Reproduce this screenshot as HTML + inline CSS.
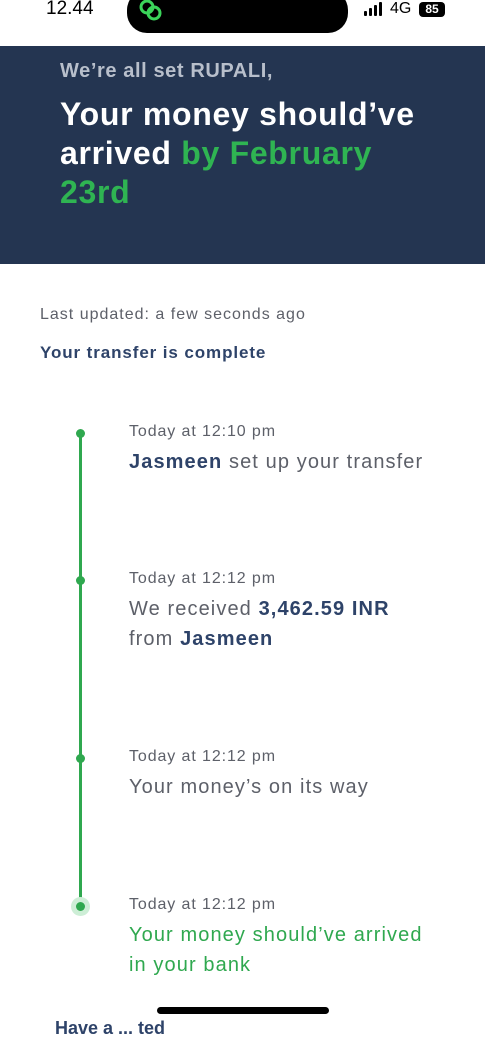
<!DOCTYPE html>
<html><head><style>
*{margin:0;padding:0;box-sizing:border-box}
body{width:485px;height:1024px;overflow:hidden;background:#fff;font-family:"Liberation Sans",sans-serif;position:relative;color:#5d6069}
.a{position:absolute;white-space:nowrap}
.t{font-size:16px;color:#5d6069;letter-spacing:0.9px}
.m{font-size:20px;color:#5d6069;line-height:30px;letter-spacing:1.1px}
b{color:#2e4369;font-weight:bold}
.dot{position:absolute;left:76px;width:9px;height:9px;border-radius:50%;background:#2fa84f}
.bar{position:absolute;width:3px;background:#000;border-radius:1px}
</style></head><body>
<div class="a" style="left:46px;top:-1px;font-size:19px;color:#000;line-height:20px">12.44</div>
<div class="a" style="left:127px;top:-10px;width:221px;height:43px;background:#000;border-radius:20px"></div>
<svg class="a" style="left:136px;top:-2px" width="30" height="26" viewBox="0 0 30 26"><circle cx="11" cy="9" r="6" fill="none" stroke="#3bd45a" stroke-width="3"/><circle cx="18" cy="15" r="6" fill="none" stroke="#3bd45a" stroke-width="3"/></svg>
<div class="bar" style="left:364px;top:11px;height:5px"></div>
<div class="bar" style="left:369px;top:8px;height:8px"></div>
<div class="bar" style="left:374px;top:5px;height:11px"></div>
<div class="bar" style="left:379px;top:2px;height:14px"></div>
<div class="a" style="left:390px;top:0px;font-size:16px;color:#000">4G</div>
<div class="a" style="left:419px;top:2px;width:26px;height:15px;background:#000;border-radius:4px;color:#fff;font-size:12px;font-weight:bold;text-align:center;line-height:15px">85</div>
<div class="a" style="left:0;top:46px;width:485px;height:218px;background:#243551"></div>
<div class="a" style="left:60px;top:60px;font-size:20px;font-weight:bold;color:#b8bfcb;letter-spacing:0.6px">We’re all set RUPALI,</div>
<div class="a" style="left:60px;top:95px;font-size:32px;font-weight:bold;color:#fff;line-height:39px;letter-spacing:0.7px">Your money should’ve<br>arrived <span style="color:#2fb452">by February</span><br><span style="color:#2fb452">23rd</span></div>
<div class="a t" style="left:40px;top:306px;letter-spacing:1px">Last updated: a few seconds ago</div>
<div class="a" style="left:40px;top:343px;font-size:17px;font-weight:bold;color:#2e4369;letter-spacing:0.9px">Your transfer is complete</div>
<div class="a" style="left:79px;top:433px;width:3px;height:474px;background:#2fa84f"></div>
<div class="dot" style="top:429px"></div>
<div class="dot" style="top:576px"></div>
<div class="dot" style="top:754px"></div>
<div class="a" style="left:71px;top:897px;width:19px;height:19px;border-radius:50%;background:#cdeed6"></div>
<div class="dot" style="top:902px"></div>
<div class="a t" style="left:129px;top:423px">Today at 12:10 pm</div>
<div class="a m" style="left:129px;top:447px"><b>Jasmeen</b> set up your transfer</div>
<div class="a t" style="left:129px;top:570px">Today at 12:12 pm</div>
<div class="a m" style="left:129px;top:594px">We received <b>3,462.59 INR</b><br>from <b>Jasmeen</b></div>
<div class="a t" style="left:129px;top:748px">Today at 12:12 pm</div>
<div class="a m" style="left:129px;top:772px">Your money’s on its way</div>
<div class="a t" style="left:129px;top:896px">Today at 12:12 pm</div>
<div class="a m" style="left:129px;top:920px;color:#2fa84f">Your money should’ve arrived<br>in your bank</div>
<div class="a" style="left:157px;top:1007px;width:172px;height:7px;border-radius:4px;background:#000"></div>
<div class="a" style="left:55px;top:1018px;font-size:18px;font-weight:bold;color:#2e4369">Have a ... ted</div>
</body></html>
